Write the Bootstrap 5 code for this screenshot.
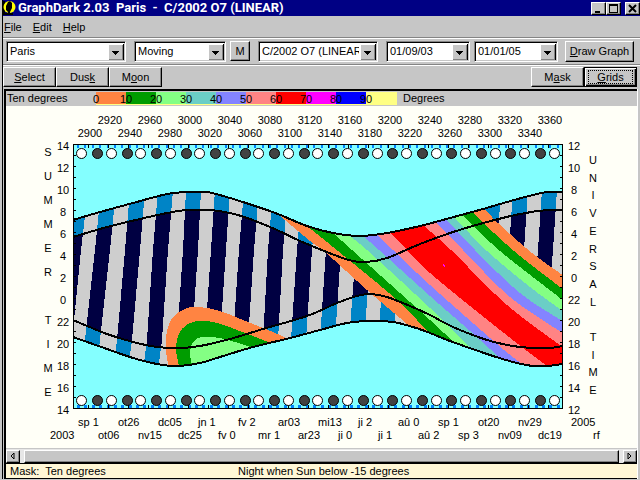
<!DOCTYPE html>
<html lang="en">
<head>
<meta charset="utf-8">
<meta name="viewport" content="width=device-width, initial-scale=1">
<title>GraphDark 2.03</title>
<link href="https://cdn.jsdelivr.net/npm/bootstrap@5.3.0/dist/css/bootstrap.min.css" rel="stylesheet">
<style>
body{background:#c6c6c6;color:#000;font:11px/14px "Liberation Sans",Arial,sans-serif}
.window{border-left:1px solid #000;margin-left:2px}
.title-bar{background:#000084;color:#fff;height:16px}
.title-bar h1{font:bold 13px/14px Roboto,sans-serif;white-space:pre;padding-left:2px}
.raised{background:#c6c6c6;color:#000;padding:0;border:1px solid;border-color:#fff #000 #000 #fff;box-shadow:inset -1px -1px #848484;border-radius:0;font-size:inherit;line-height:14px;white-space:nowrap}
.win-btn{width:15px;height:13px;line-height:0}
.menu-bar{height:21px;padding-left:1px;gap:11px}
.menu-bar a{color:#000;text-decoration:none}
.tools{border-top:1px solid #848484;border-bottom:1px solid #848484;box-shadow:inset 0 1px #fff,0 1px #fff;height:28px;padding:0 6px 0 3px}
.combo{appearance:none;min-width:0;border:1px solid;border-color:#848484 #fff #fff #848484;outline:0;box-shadow:inset 1px 1px #000,inset -1px -1px #c6c6c6;height:21px;padding:0 18px 0 3px;border-radius:0;color:#000;line-height:18px;
background:#fff url("data:image/svg+xml,%3Csvg xmlns='http://www.w3.org/2000/svg' width='16' height='17' shape-rendering='crispEdges'%3E%3Cpath fill='%23000' d='M0 0h16v17H0z'/%3E%3Cpath fill='%23fff' d='M0 0h15v16H0z'/%3E%3Cpath fill='%23848484' d='M1 1h14v15H1z'/%3E%3Cpath fill='%23c6c6c6' d='M1 1h13v14H1z'/%3E%3Cpath d='M4 7h7v1H4zM5 8h5v1H5zM6 9h3v1H6zM7 10h1v1H7z'/%3E%3C/svg%3E") no-repeat right 1px top 2px}
.w-place{flex:0 1 120px}.w-kind{flex:0 1 92px}.w-date{flex:0 1 84px}
.w-m{flex:0 0 20px;height:20px}.w-draw{flex:0 0 69px;height:21px}
.tabs-row{height:24px;padding:2px 3px 0 0}
.tab-btn{width:53px;height:20px}
.is-current{border-color:#000;box-shadow:inset 1px 1px #fff,inset -1px -1px #000,inset -2px -2px #848484}
.is-current span{display:block;border:1px dotted #000;margin:0 3px;line-height:12px}
.pane{border:solid #000;border-width:2px 0 1px 2px;margin:0 3px 0 1px;background:#fffff7;box-shadow:1px 0 #fff}
.legend-bar{background:#c6c6c6;height:15px}
.legend-name{width:75px;padding-left:1px}
.scale{width:316px;height:14px;padding-top:1px;background:linear-gradient(90deg,#ff8442 0 30px,#009c00 0 60px,#84ff84 0 90px,#6bcec6 0 120px,#8484ff 0 150px,#ff8484 0 180px,#f00 0 210px,#f0f 0 240px,#00f 0 270px,#ffff84 0) 15px 1px/301px 12px no-repeat,linear-gradient(#ffff84,#ffff84) 15px 13px/301px 1px no-repeat}
.scale span{width:30px;text-align:center}
.legend-unit{padding-left:6px}
.scroll-bar{height:15px;background:#e7e7e7;padding-top:1px;border-top:1px solid #c6c6c6}
.arrow{width:14px;height:13px;line-height:0}
.thumb{height:13px}
.status-bar{background:#fff7d6;border-top:1px solid #000;height:15px;padding-left:4px;white-space:pre}
.status-mask{width:228px}
.chart{font-size:11px}
</style>
</head>
<body>
<div class="window">
<header class="title-bar d-flex align-items-center">
<svg class="flex-shrink-0" width="13" height="14" viewBox="0 0 13 14" aria-hidden="true"><path d="M0 0h2v14H0zM0 12h10v2H0z"/><circle cx="6.500" cy="6" r="6" fill="#ff0"/><path d="M5 1l2-1 2 2v5L8 9l-1 2v3H5v-3L3 9V5l1-2zM2 12h7v1H2z"/></svg>
<h1 class="m-0 flex-grow-1">GraphDark 2.03  Paris  -  C/2002 O7 (LINEAR)</h1>
<button class="raised win-btn" aria-label="Minimize"><svg width="11" height="9"><path d="M2 7h5v2H2z"/></svg></button>
<button class="raised win-btn" aria-label="Maximize"><svg width="11" height="9" shape-rendering="crispEdges"><path fill-rule="evenodd" d="M1 0h9v9H1zM2 2v6h7V2z"/></svg></button>
<button class="raised win-btn ms-1" aria-label="Close"><svg width="11" height="9"><path d="M2 1l7 7M9 1l-7 7" stroke="#000" stroke-width="2"/></svg></button>
</header>
<nav class="menu-bar d-flex align-items-center"><a href="#"><u>F</u>ile</a><a href="#"><u>E</u>dit</a><a href="#"><u>H</u>elp</a></nav>
<div class="tools d-flex align-items-center gap-1">
<select class="combo w-place me-1" aria-label="Place"><option>Paris</option></select>
<select class="combo w-kind" aria-label="Object type"><option>Moving</option></select>
<button class="raised w-m me-1">M</button>
<select class="combo w-place me-1" aria-label="Object"><option>C/2002 O7 (LINEAR)</option></select>
<select class="combo w-date" aria-label="Start date"><option>01/09/03</option></select>
<select class="combo w-date me-auto" aria-label="End date"><option>01/01/05</option></select>
<button class="raised w-draw"><u>D</u>raw Graph</button>
</div>
<div class="tabs-row d-flex">
<button class="raised tab-btn"><u>S</u>elect</button><button class="raised tab-btn">Dus<u>k</u></button><button class="raised tab-btn">M<u>o</u>on</button>
<button class="raised tab-btn ms-auto">M<u>a</u>sk</button><button class="raised tab-btn is-current"><span><u>G</u>rids</span></button>
</div>
<main class="pane">
<div class="legend-bar d-flex"><span class="legend-name">Ten degrees</span><div class="scale d-flex"><span>0</span><span>10</span><span>20</span><span>30</span><span>40</span><span>50</span><span>60</span><span>70</span><span>80</span><span>90</span></div><span class="legend-unit">Degrees</span></div>
<svg class="chart d-block w-100" viewBox="6 106 631 342" role="img" aria-label="Night hours and altitude over the year">
<defs><clipPath id="dark"><path id="darkShape"/></clipPath><clipPath id="night"><path id="nightShape"/></clipPath></defs>
<rect x="73" y="144" width="490" height="265" fill="#84ffff"/>
<g clip-path="url(#dark)" shape-rendering="crispEdges">
<path fill="#cecece" d="M73 185h490v185H73z"/>
<g id="duskStripes" fill="#0084c6"></g>
<g clip-path="url(#night)"><g id="nightStripes" fill="#000042"></g></g>
<g id="bands"></g>
<path fill="#f0f" d="M443 264h1v1h1v2h-1v-1h-1z"/><path fill="#6bcec6" d="M216 357h3v1h-5z"/>
</g>
<g id="curves" fill="none" stroke="#000" stroke-width="2" shape-rendering="crispEdges"></g>
<g id="ticks" shape-rendering="crispEdges"></g>
<rect x="73.500" y="144.500" width="489" height="264" fill="none" stroke="#000" shape-rendering="crispEdges"/>
<g id="moons" stroke="#000"></g>
<g id="labels"></g>
</svg>
<div class="scroll-bar d-flex">
<button class="raised arrow" aria-label="Scroll left"><svg width="12" height="11"><path d="M7 2v6L4 5z" fill="none" stroke="#000"/></svg></button>
<div class="raised thumb flex-grow-1 mx-1"></div>
<button class="raised arrow" aria-label="Scroll right"><svg width="12" height="11"><path d="M4 2v6l3-3z" fill="none" stroke="#000"/></svg></button>
</div>
<footer class="status-bar d-flex"><span class="status-mask">Mask:  Ten degrees</span><span>Night when Sun below -15 degrees</span></footer>
</main>
</div>
<script src="https://cdn.jsdelivr.net/npm/bootstrap@5.3.0/dist/js/bootstrap.bundle.min.js"></script>
<script>
const NS = 'http://www.w3.org/2000/svg', $ = id => document.getElementById(id);
function add(parent, tag, attrs, text) {
  const e = document.createElementNS(NS, tag);
  for (const k in attrs) e.setAttribute(k, attrs[k]);
  if (text !== undefined) e.textContent = text;
  $(parent).appendChild(e);
}
// Smooth line through points; the result starts with the first point, without a move command.
function line(p) {
  let d = p[0].join(' ');
  for (let i = 0; i < p.length - 1; i++) {
    const a = p[i - 1] || p[i], b = p[i], c = p[i + 1], e = p[i + 2] || c;
    d += `C${b[0] + (c[0] - a[0]) / 6} ${b[1] + (c[1] - a[1]) / 6} ${c[0] - (e[0] - b[0]) / 6} ${c[1] - (e[1] - b[1]) / 6} ${c[0]} ${c[1]}`;
  }
  return d;
}
const rev = p => p.slice().reverse();
const sunrise = [[73,220],[100,212],[133,203],[167,194],[187,192],[207,192],[230,198],[258,207],[278,214],[307,226],[333,233],[360,236],[387,233],[420,226],[450,218],[483,209],[507,202],[533,195],[548,192],[563,192]];
const dawn = [[73,237],[107,227],[140,219],[167,213],[187,210],[210,210],[230,213],[250,219],[277,230],[300,241],[337,256],[353,261],[367,262],[387,258],[420,244],[453,232],[487,222],[520,214],[547,210],[563,210]];
const dusk = [[73,320],[107,334],[133,342],[157,347],[180,348],[200,346],[230,339],[263,329],[307,316],[337,303],[357,296],[370,294],[387,297],[410,306],[430,315],[453,327],[487,340],[513,346],[533,348],[550,348],[563,346]];
const sunset = [[73,337],[107,349],[133,358],[157,364],[177,366],[200,363],[220,357],[253,347],[290,338],[320,330],[347,323],[370,321],[393,322],[413,327],[430,333],[450,341],[487,354],[513,362],[533,366],[547,366],[563,364]];
$('darkShape').setAttribute('d', `M${line(sunrise)}L${line(rev(sunset))}Z`);
$('nightShape').setAttribute('d', `M${line(dawn)}L${line(rev(dusk))}Z`);
[sunrise, dawn, dusk, sunset].forEach(c => add('curves', 'path', {d: 'M' + line(c)}));

// Moonless periods: x at y 190, 250 and 340
[[73,66,57],[101,95,85],[130,125,117],[158,153,147],[186,183,177],[215,211,205],[244,239,233],[273,268,263],[302,297,291],[331,326,320],[359,356,349],[388,385,378],[486,482,474],[513,509,502],[542,538,530]].forEach(([a, b, c]) => {
  for (const g of ['duskStripes', 'nightStripes'])
    add(g, 'path', {d: `M${a} 190L${b} 250L${c} 340L${c - 4} 370H${c + 11}L${c + 15} 340L${b + 15} 250L${a + 15} 190Z`});
});

// Altitude contours, ten degrees apart: lower-left side, upper-right side, fill above the contour
const contours = [
 ['#ff8442', [[272,208],[278,214],[310,241],[325,252],[367,290],[407,324],[415,332]], [[475,198],[485,209],[498,223],[532,253],[564,276]]],
 ['#009c00', [[299,220],[307,226],[338,251],[397,300],[428,332],[436,340]], [[463,202],[472,212],[514,251],[564,290]]],
 ['#84ff84', [[325,226],[333,233],[352,250],[430,320],[452,341],[460,350]], [[454,207],[462,215],[500,251],[564,301]]],
 ['#6bcec6', [[340,226],[347,234],[367,250],[430,308],[473,350],[482,360]], [[446,209],[454,217],[487,251],[530,287],[564,312]]],
 ['#8484ff', [[355,228],[363,236],[379,250],[430,296],[470,331],[500,358],[510,366]], [[438,211],[446,219],[475,250],[520,293],[564,322]]],
 ['#ff8484', [[369,227],[377,235],[393,250],[430,285],[497,344],[522,364],[530,370]], [[427,214],[435,222],[463,250],[510,297],[564,334]]],
 ['#ff0000', [[384,225],[391,233],[407,250],[430,273],[470,306],[523,348],[547,366],[555,374]], [[414,217],[423,225],[451,250],[507,305],[564,348]]]
];
contours.forEach(([fill, lo, hi]) => add('bands', 'path', {fill, d: `M${line(lo)}L564 380L${line(rev(hi))}Z`}));
[['#ff8442', [[169,370],[166,350],[167,331],[173,317],[187,308],[200,307],[220,311],[243,320],[273,332],[290,340]]],
 ['#009c00', [[180,370],[176,347],[182,329],[197,321],[217,323],[237,330],[270,343],[276,348]]],
 ['#84ff84', [[193,370],[190,352],[194,341],[203,337],[220,338],[235,342],[253,348],[258,352]]]
].forEach(([fill, p]) => add('bands', 'path', {fill, d: `M${line(p)}V375Z`}));

const box = (x, y, w, h, f) => add('ticks', 'rect', {x, y, width: w, height: h, fill: f});
for (let i = 0; i < 66; i++) {
  const x = Math.round(77 + i * 7.38);
  box(x, 145, 2, 3, '#0084ff');
  box(x, 405, 3, 3, '#0084ff');
}
for (let x = 88; x < 563; x += 20) { box(x, 145, 1, 3, '#000'); box(x, 405, 1, 3, '#000'); }
for (let y = 155; y < 405; y += 11) { box(74, y, 2, 1, '#000'); box(560, y, 2, 1, '#000'); }
for (const cy of [153.5, 400.5]) for (let i = 0; i < 17; i++) {
  add('moons', 'circle', {cx: Math.round(81 + i * 29.56) + .5, cy, r: 5, fill: '#fff'});
  if (i < 16) add('moons', 'circle', {cx: Math.round(97 + i * 29.53) + .5, cy, r: 5, fill: '#424242'});
}

const label = (t, x, y, anchor) => add('labels', 'text', {x, y, 'text-anchor': anchor || 'middle'}, t);
for (let i = 0; i < 24; i++) label(2900 + 20 * i, 90 + 20 * i, i % 2 ? 124 : 137);
[14,12,10,8,6,4,2,0,22,20,18,16,14].forEach((h, i) => label(h, 63, 150 + 22 * i));
[12,10,8,6,4,2,0,22,20,18,16,14,12].forEach((h, i) => label(h, 574, 150 + 22 * i));
[...'SUMMER TIME'].forEach((c, i) => c > ' ' && label(c, 48, 156 + 24 * i));
[...'UNIVERSAL TIME'].forEach((c, i) => c > ' ' && label(c, 593, Math.round(164 + 17.7 * i)));
['sp 1','ot06','ot26','nv15','dc05','dc25','jn 1','fv 0','fv 2','mr 1','ar03','ar23','mi13','ji 0','ji 2','ji 1','aû 0','aû 2','sp 1','sp 3','ot20','nv09','nv29','dc19']
  .forEach((t, i) => label(t, 78 + 20 * i, i % 2 ? 439 : 426, 'start'));
label('2003', 50, 439, 'start'); label('2005', 571, 426, 'start'); label('rf', 593, 439, 'start');
</script>
</body>
</html>
